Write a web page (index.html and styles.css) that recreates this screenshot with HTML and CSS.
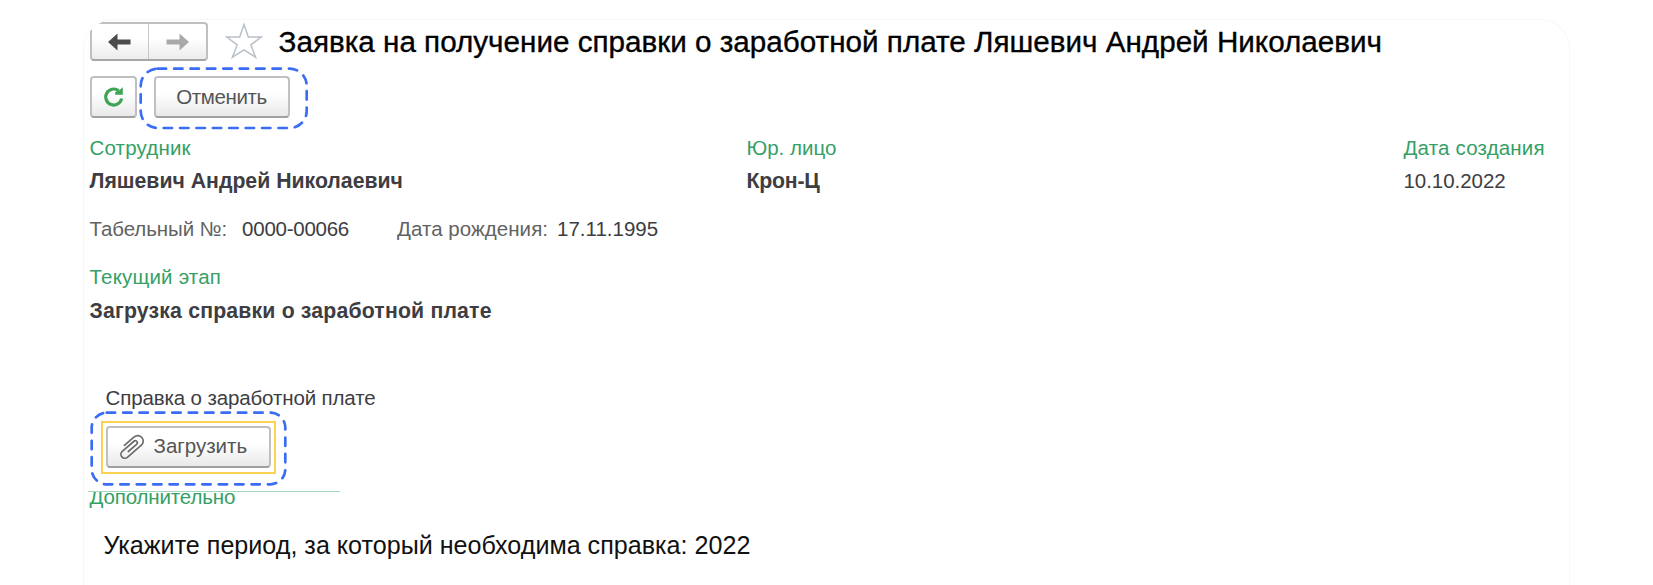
FILE: index.html
```html
<!DOCTYPE html>
<html lang="ru">
<head>
<meta charset="utf-8">
<title>Заявка на получение справки</title>
<link rel="stylesheet" href="styles.css">
</head>
<body>
<main class="card">
  <header class="header">
    <div class="nav">
      <button class="nav-item" aria-label="Назад"><svg width="24" height="20" viewBox="0 0 24 20"><path d="M0 10L9.500 1.500V7.600H22.500V12.400H9.500V18.500Z" fill="#4b4b4b"/></svg></button>
      <button class="nav-item forward" aria-label="Вперёд"><svg width="24" height="20" viewBox="0 0 24 20"><path d="M23 10L13.500 1.500V7.600H.5V12.400H13.500V18.500Z" fill="#a9a9a9"/></svg></button>
    </div>
    <svg class="star" width="40" height="38" viewBox="0 0 40 38"><path d="M20 2.500L24.300 15H37.200L26.900 22.800L31.500 35.200L20 27.800L8.500 35.200L13.100 22.800L2.800 15H15.700Z" fill="#fff" stroke="#b9c0c7" stroke-width="1.500"/></svg>
    <h1 class="title">Заявка на получение справки о заработной плате Ляшевич Андрей Николаевич</h1>
  </header>

  <div class="toolbar">
    <button class="btn refresh" aria-label="Обновить"><svg width="22" height="22" viewBox="0 0 22 22"><path d="M15.500 4.600A8 8 0 1 0 18.600 12.500" fill="none" stroke="#3fa554" stroke-width="3.200"/><path d="M19.800 1.200V8.800H12.200V6L16 4.600Z" fill="#3fa554"/></svg></button>
    <div class="marked cancel-wrap">
      <button class="btn cancel"><span class="cancel-text">Отменить</span></button>
      <svg class="mark mark-cancel" width="170" height="63" viewBox="0 0 170 63"><rect x="1.700" y="1.700" width="166" height="59.300" rx="17"/></svg>
    </div>
  </div>

  <section class="fields">
    <div class="field">
      <div class="label">Сотрудник</div>
      <div class="value strong">Ляшевич Андрей Николаевич</div>
    </div>
    <div class="field">
      <div class="label entity">Юр. лицо</div>
      <div class="value strong company">Крон-Ц</div>
    </div>
    <div class="field">
      <div class="label">Дата создания</div>
      <div class="value date">10.10.2022</div>
    </div>
  </section>

  <div class="meta">
    <span class="meta-label number-label">Табельный №:</span>
    <span class="number">0000-00066</span>
    <span class="meta-label birth-label">Дата рождения:</span>
    <span class="birth">17.11.1995</span>
  </div>

  <section class="stage">
    <div class="label">Текущий этап</div>
    <div class="value strong stage-name">Загрузка справки о заработной плате</div>
  </section>

  <section class="upload">
    <div class="upload-label">Справка о заработной плате</div>
    <div class="marked focus">
      <button class="btn load"><svg width="28" height="26" viewBox="0 0 28 26"><path transform="translate(14 13) rotate(-41)" fill="none" stroke="#6b6b6b" stroke-width="1.700" stroke-linecap="round" d="M-5 1.600H6A2 2 0 0 0 6 -2.400H-9.500A3.900 3.900 0 0 0 -9.500 5.400H9A5.450 5.450 0 0 0 9 -5.500H-4"/></svg><span class="load-text">Загрузить</span></button>
      <svg class="mark mark-load" width="197" height="75" viewBox="0 0 197 75"><rect x="1.700" y="1.700" width="193.600" height="71.600" rx="15"/></svg>
    </div>
  </section>

  <section class="extra">
    <div class="extra-head"><div class="label extra-label">Дополнительно</div></div>
    <p class="period">Укажите период, за который необходима справка: 2022</p>
  </section>
</main>
</body>
</html>
```
FILE: styles.css
```css
* { box-sizing: border-box; }
body {
  margin: 0;
  height: 585px;
  padding: 19px 0 0 83px;
  overflow: hidden;
  background: #fff;
  font-family: "Liberation Sans", Arial, sans-serif;
  font-size: 20.5px;
  color: #3d3d42;
}
.card {
  width: 1487px;
  height: 566px;
  padding: 2px 0 0 5.5px;
  border: 1px solid #f8f8f8;
  border-bottom: 0;
  border-radius: 30px 30px 0 0;
  overflow: hidden;
}
button { font: inherit; color: inherit; padding: 0; margin: 0; }
svg { display: block; flex: none; }
.header { display: flex; height: 39px; }
.nav {
  display: flex;
  width: 118px;
  border: 2px solid #c0c0c0;
  border-bottom-color: #a6a6a6;
  border-radius: 4px;
  background: linear-gradient(#fff 40%, #ececec);
}
.nav-item {
  flex: 1;
  display: flex;
  align-items: center;
  justify-content: center;
  border: 0;
  background: none;
}
.nav-item + .nav-item { border-left: 1px solid #c8c8c8; }
.forward { padding-left: 1px; }
.star { margin-left: 16.5px; }
.title {
  margin: 0 0 0 14.5px;
  font-size: 29.65px;
  line-height: 40px;
  font-weight: 400;
  white-space: nowrap;
  color: #000;
  -webkit-text-stroke: .35px #000;
}
.toolbar { display: flex; gap: 17px; margin-top: 15px; height: 42px; }
.btn {
  display: flex;
  align-items: center;
  justify-content: center;
  height: 42px;
  border: 2px solid #c0c0c0;
  border-bottom-color: #a0a0a0;
  border-radius: 4px;
  background: linear-gradient(#fff 40%, #e9e9e9);
  color: #555;
}
.refresh { width: 47px; padding-left: 1px; }
.cancel { width: 136px; letter-spacing: -.38px; }
.marked { position: relative; }
.mark { position: absolute; pointer-events: none; }
.mark rect {
  fill: none;
  stroke: #3a6cf4;
  stroke-width: 2.7;
  stroke-linecap: round;
  stroke-dasharray: 8.4 8;
}
.mark-cancel { left: -15px; top: -9px; }
.mark-load { left: -12.5px; top: -12px; }
.fields { display: grid; grid-template-columns: 657px 657px auto; margin-top: 14px; }
.label { line-height: 32px; color: #35a065; letter-spacing: .18px; white-space: nowrap; }
.entity { letter-spacing: 0; }
.value { line-height: 35px; white-space: nowrap; }
.strong { font-size: 21.25px; font-weight: 700; }
.company { letter-spacing: -.2px; }
.date { letter-spacing: -.05px; line-height: 33px; }
.meta { display: flex; margin-top: 13px; line-height: 34px; white-space: nowrap; }
.meta-label { color: #626262; }
.number-label { letter-spacing: -.1px; }
.number { margin-left: 15px; letter-spacing: -.25px; }
.birth-label { margin-left: 48px; letter-spacing: .05px; }
.birth { margin-left: 9px; }
.stage { margin-top: 15px; }
.stage-name { line-height: 36px; letter-spacing: .17px; }
.upload { padding-left: 11px; }
.upload-label { padding-left: 5px; margin-top: 54px; line-height: 30px; height: 38px; letter-spacing: -.13px; }
.focus {
  width: 175px;
  height: 53px;
  padding: 3px;
  border: 2px solid #fbd350;
}
.load { width: 165px; justify-content: flex-start; padding-left: 9px; gap: 9px; line-height: 22px; }
.load-text { padding-bottom: 2px; }
.extra { margin-top: 17px; margin-left: -2px; }
.extra-head {
  display: flex;
  align-items: flex-end;
  width: 252px;
  height: 18px;
  padding-left: 2px;
  border-top: 1px solid #a5d6bb;
  overflow: hidden;
}
.extra-label { line-height: 24px; letter-spacing: -.14px; }
.period { margin: 16px 0 0 16px; font-size: 25.12px; line-height: 40px; color: #111; }
```
